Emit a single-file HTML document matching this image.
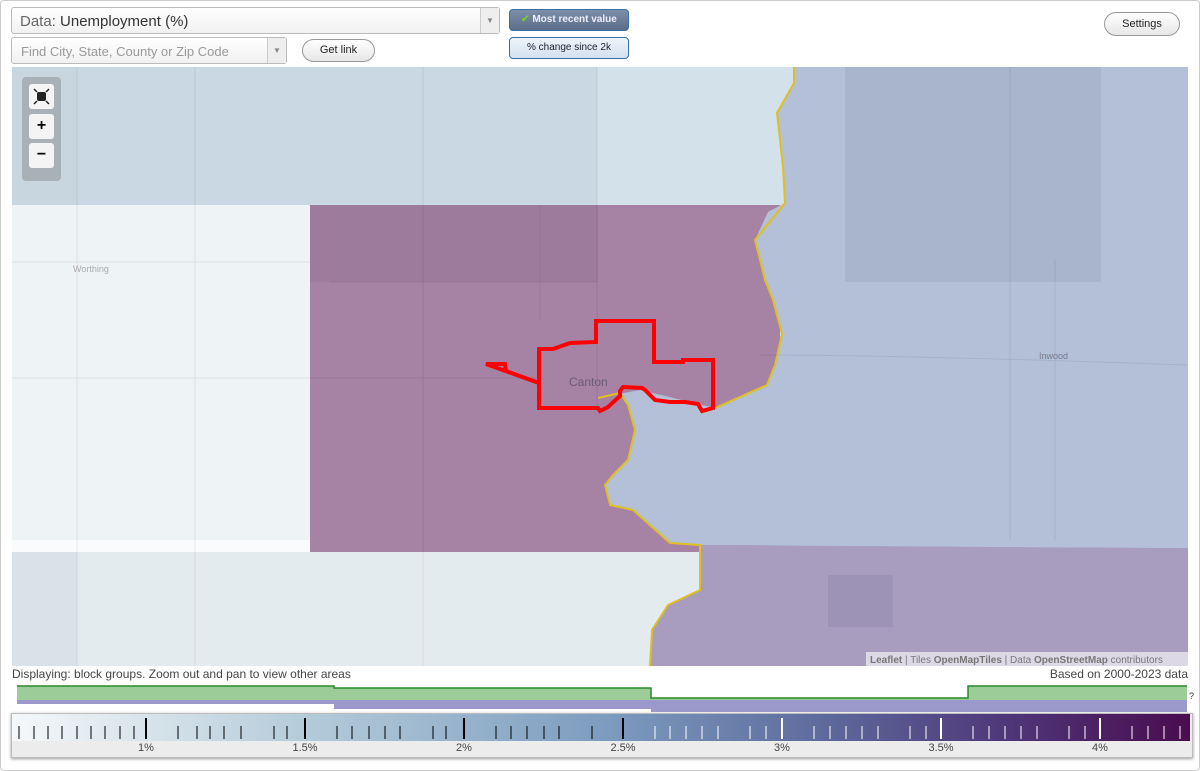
<!DOCTYPE html>
<html><head><meta charset="utf-8"><style>
body{margin:0;width:1200px;height:771px;background:#fff;font-family:"Liberation Sans",sans-serif;overflow:hidden;position:relative}
.frame{position:absolute;left:0;top:0;width:1198px;height:769px;border:1px solid #ccc;border-radius:4px}
.sel{position:absolute;border:1px solid #bbb;border-radius:3px;background:linear-gradient(#fff,#f1f1f1);font-size:14px;color:#555;box-sizing:border-box}
.arr{position:absolute;right:0;top:0;bottom:0;width:18px;border-left:1px solid #ccc;background:#eee;color:#888;font-size:8px;text-align:center}
.btn{position:absolute;border:1px solid #999;border-radius:12px;background:linear-gradient(#fff,#e6e6e6);font-size:11px;text-align:center;color:#222;box-sizing:border-box}
.tog{position:absolute;left:509px;width:120px;height:22px;border:1px solid #3a6ea5;border-radius:4px;box-sizing:border-box;font-size:10px;text-align:center;line-height:20px}
.zb{position:absolute;left:29px;width:25px;height:25px;background:#f4f4f4;border-radius:3px;text-align:center;font-weight:bold;font-size:16px;line-height:24px}
</style></head><body>
<div class="frame"></div>
<div class="sel" style="left:11px;top:7px;width:489px;height:27px;padding:5px 8px;font-size:15px"><span style="color:#666">Data:</span> <span style="color:#333">Unemployment (%)</span><div class="arr" style="line-height:26px">▼</div></div>
<div class="sel" style="left:11px;top:37px;width:276px;height:27px;padding:6px 9px;font-size:13px;color:#999">Find City, State, County or Zip Code<div class="arr" style="line-height:26px">▼</div></div>
<div class="btn" style="left:302px;top:39px;width:73px;height:23px;line-height:21px">Get link</div>
<div class="tog" style="top:9px;background:linear-gradient(#7d8ea8,#5b6d88);color:#eef;font-weight:bold"><span style="color:#7c3">✔</span> Most recent value</div>
<div class="tog" style="top:37px;background:linear-gradient(#eef4fb,#d3e1ef);color:#223">% change since 2k</div>
<div class="btn" style="left:1104px;top:12px;width:76px;height:24px;line-height:22px">Settings</div>

<svg style="position:absolute;left:12px;top:67px" width="1176" height="599" viewBox="12 67 1176 599">
<rect x="12" y="67" width="1176" height="599" fill="#d3e1ea"/>
<rect x="12" y="67" width="65" height="138" fill="#c8d6e0"/>
<rect x="77" y="67" width="520" height="138" fill="#c9d8e2"/>
<rect x="12" y="205" width="298" height="335" fill="#eef3f5"/>
<rect x="12" y="540" width="298" height="12" fill="#fafbfc"/>
<rect x="12" y="552" width="690" height="114" fill="#e4ebef"/>
<rect x="12" y="552" width="65" height="114" fill="#d8e2e8"/>
<rect x="310" y="205" width="470" height="347" fill="#a682a5"/>
<rect x="310" y="205" width="288" height="77" fill="#9d7b9d"/>
<polygon points="794,67 1188,67 1188,548 700,545 670,543 633,510 610,505 605,485 613,475 628,460 635,430 628,405 620,393 598,398 640,390 715,408 767,385 775,365 782,334 773,300 765,280 755,240 768,212 785,203 783,167 777,113 794,83" fill="#b3c0d8"/>
<rect x="845" y="67" width="256" height="215" fill="#a9b5cd"/>
<polygon points="700,545 1188,548 1188,666 650,666 652,630 668,605 700,590" fill="#a89dbf"/>
<rect x="828" y="575" width="65" height="52" fill="#9d93b6"/>
<polyline points="794,67 794,83 777,113 783,167 785,203 755,240 765,280 773,300 782,334 775,365 767,385 715,408 700,411" fill="none" stroke="#e0c020" stroke-width="2"/>
<polyline points="598,398 620,393 628,405 635,430 628,460 613,475 605,485 610,505 633,510 670,543 700,545 700,590 668,605 652,630 650,666" fill="none" stroke="#e0c020" stroke-width="2"/>
<g stroke="#000" stroke-opacity=".07" fill="none"><path d="M77 67V666M195 67V666M423 67V666M597 67V410M12 378H540M12 262H310M330 282H598M540 205V320M1010 67V540M1055 260V540M760 355Q900 355 1188 365"/></g>
<polygon points="486,364 505,364 506,371 539,383 539,349 553,349 570,343 596,342 596,321 654,321 654,362 683,362 683,360 713,360 713,408 702,411 698,404 685,402 670,402 655,400 645,390 642,388 623,387 620,391 620,396 608,407 600,411 598,408 539,408 539,383" fill="none" stroke="#f00" stroke-width="4"/>
<text x="569" y="386" font-size="12" fill="#6a5a78" font-family="Liberation Sans">Canton</text>
<text x="73" y="272" font-size="9" fill="#aaa" font-family="Liberation Sans">Worthing</text>
<text x="1039" y="359" font-size="9" fill="#778" font-family="Liberation Sans">Inwood</text>
<rect x="866" y="652" width="322" height="14" fill="#fff" fill-opacity=".6"/>
<text x="870" y="663" font-size="10" fill="#777" font-family="Liberation Sans"><tspan font-weight="bold">Leaflet</tspan> | Tiles <tspan font-weight="bold">OpenMapTiles</tspan> | Data <tspan font-weight="bold">OpenStreetMap</tspan> contributors</text>
</svg>
<div style="position:absolute;left:22px;top:77px;width:39px;height:104px;background:#a9b1b8;border-radius:4px"></div>
<div class="zb" style="top:84px"><svg width="25" height="25" style="display:block"><rect x="8" y="8" width="9" height="9" rx="2" fill="#222"/><path d="M5 5l3 3M20 5l-3 3M5 20l3-3M20 20l-3-3" stroke="#222" stroke-width="1.5"/></svg></div>
<div class="zb" style="top:114px">+</div>
<div class="zb" style="top:143px">−</div>

<div style="position:absolute;left:12px;top:667px;font-size:12px;color:#444">Displaying: block groups. Zoom out and pan to view other areas</div>
<div style="position:absolute;right:12px;top:667px;font-size:12px;color:#444">Based on 2000-2023 data</div>
<svg style="position:absolute;left:0;top:684px" width="1200" height="30">
<polygon points="17,2 334,2 334,4 651,4 651,14 968,14 968,2 1187,2 1187,16 17,16" fill="#9ccc98"/>
<polyline points="17,2 334,2 334,4 651,4 651,14 968,14 968,2 1187,2" fill="none" stroke="#2a8a2a" stroke-width="1.5"/>
<rect x="17" y="16" width="317" height="4" fill="#9b99cb"/>
<rect x="334" y="16" width="317" height="9" fill="#9b99cb"/>
<rect x="651" y="16" width="536" height="12" fill="#9b99cb"/>
<text x="1189" y="15" font-size="9" fill="#333">?</text>
</svg>
<div style="position:absolute;left:11px;top:713px;width:1180px;height:43px;border:1px solid #bbb;box-shadow:0 1px 3px #999;background:#ececec"></div>
<svg style="position:absolute;left:12px;top:714px" width="1178" height="42">
<defs><linearGradient id="g"><stop offset="0" stop-color="#f5f8fa"/><stop offset=".25" stop-color="#b4cbd9"/><stop offset=".5" stop-color="#7d9dc0"/><stop offset=".68" stop-color="#5f6d9e"/><stop offset=".85" stop-color="#4e3577"/><stop offset="1" stop-color="#4a0c4f"/></linearGradient></defs>
<rect width="1178" height="27" fill="url(#g)"/>
<g font-size="11" fill="#444" text-anchor="middle" font-family="Liberation Sans">
<text x="134" y="37">1%</text><text x="293" y="37">1.5%</text><text x="452" y="37">2%</text><text x="611" y="37">2.5%</text><text x="770" y="37">3%</text><text x="929" y="37">3.5%</text><text x="1088" y="37">4%</text></g>
<g stroke-width="1">
<path stroke="#000" d="M7 12v13M22 12v13M36 12v13M50 12v13M65 12v13M79 12v13M93 12v13M108 12v13M122 12v13M166 12v13M185 12v13M198 12v13M212 12v13M229 12v13M262 12v13M275 12v13M325 12v13M340 12v13M357 12v13M373 12v13M388 12v13M421 12v13M434 12v13M484 12v13M499 12v13M515 12v13M532 12v13M547 12v13M580 12v13"/>
<path stroke="#000" stroke-width="2" d="M134 4v21M293 4v21M452 4v21M611 4v21"/>
<path stroke="#fff" d="M643 12v13M658 12v13M674 12v13M690 12v13M706 12v13M738 12v13M754 12v13M802 12v13M818 12v13M834 12v13M850 12v13M866 12v13M898 12v13M914 12v13M961 12v13M977 12v13M993 12v13M1009 12v13M1025 12v13M1057 12v13M1073 12v13M1120 12v13M1136 12v13M1152 12v13M1168 12v13"/>
<path stroke="#fff" stroke-width="2" d="M770 4v21M929 4v21M1088 4v21"/>
</g></svg>
</body></html>
